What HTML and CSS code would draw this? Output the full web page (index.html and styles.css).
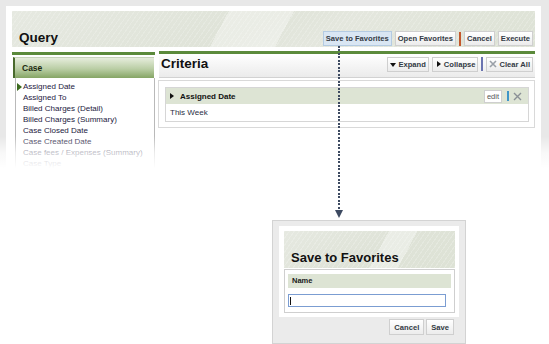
FILE: index.html
```html
<!DOCTYPE html>
<html lang="en">
  <head>
    <meta charset="UTF-8" />
    <meta name="viewport" content="width=device-width, initial-scale=1.0" />
    <title>Query - Save to Favorites</title>
    <link rel="stylesheet" href="styles.css">
  </head>
  <body>
    <div class="app">
      <div class="frame">
        <div class="banner">
          <h1 class="banner-title">Query</h1>
          <div class="actions">
            <button class="btn btn-active">Save to Favorites</button>
            <button class="btn">Open Favorites</button>
            <span class="sep sep-red"></span>
            <button class="btn">Cancel</button>
            <button class="btn">Execute</button>
          </div>
        </div>

        <div class="main">
          <div class="side">
            <div class="side-head">Case</div>
            <ul class="fields">
              <li class="field-current">Assigned Date</li>
              <li>Assigned To</li>
              <li>Billed Charges (Detail)</li>
              <li>Billed Charges (Summary)</li>
              <li>Case Closed Date</li>
              <li>Case Created Date</li>
              <li>Case fees / Expenses (Summary)</li>
              <li>Case Type</li>
            </ul>
          </div>

          <div class="criteria">
            <div class="crit-head">
              <h2 class="crit-title">Criteria</h2>
              <div class="tools">
                <button class="btn"><span class="tri-down"></span>Expand</button>
                <button class="btn"><span class="tri-right"></span>Collapse</button>
                <span class="sep sep-blue"></span>
                <button class="btn btn-clear">
                  <svg width="8" height="8" viewBox="0 0 8 8"><path d="M1 1L7 7M7 1L1 7" stroke="#9aa0a8" stroke-width="1.6"/></svg>
                  Clear All
                </button>
              </div>
            </div>
            <div class="crit-box">
              <div class="crit-item">
                <div class="item-head">
                  <span class="item-name"><span class="tri-black"></span>Assigned Date</span>
                  <span class="item-tools">
                    <span class="edit-btn">edit</span>
                    <span class="bar"></span>
                    <svg width="9" height="9" viewBox="0 0 9 9"><path d="M1 1L8 8M8 1L1 8" stroke="#8a9096" stroke-width="1.4"/></svg>
                  </span>
                </div>
                <div class="item-body">This Week</div>
              </div>
            </div>
          </div>
        </div>
      </div>
      <div class="fade"></div>
    </div>

    <div class="pointer"></div>

    <div class="dialog">
      <div class="dialog-inner">
        <div class="dialog-banner">Save to Favorites</div>
        <div class="dialog-form">
          <div class="form-label">Name</div>
          <div class="form-input"><span class="caret"></span></div>
        </div>
      </div>
      <div class="dialog-buttons">
        <button class="btn">Cancel</button>
        <button class="btn">Save</button>
      </div>
    </div>
  </body>
</html>
```

FILE: styles.css
```css
body {
  margin: 0;
  background: white;
  font-family: "Liberation Sans", Arial, sans-serif;
  color: #1c2238;
  position: relative;
  height: 344px;
  overflow: hidden;
}

.app {
  position: relative;
  height: 172px;
  background: #e8e8e8;
  padding: 6px 8px 0 6px;
  box-sizing: border-box;
  overflow: hidden;
}

.frame {
  background: white;
  height: 100%;
  padding: 5px 6px 0 6px;
}

.fade {
  position: absolute;
  left: 0;
  right: 0;
  bottom: 0;
  height: 36px;
  background: linear-gradient(to bottom, rgba(255, 255, 255, 0), rgba(255, 255, 255, 0.7) 45%, #fff 90%);
}

.banner {
  height: 35px;
  display: flex;
  justify-content: space-between;
  align-items: flex-end;
  padding: 0 2px 1px 7px;
  background:
    linear-gradient(118deg, rgba(255, 255, 255, 0) 40%, rgba(255, 255, 255, 0.35) 40% 52%, rgba(255, 255, 255, 0) 52%),
    repeating-linear-gradient(125deg, rgba(255, 255, 255, 0.18) 0 1px, rgba(255, 255, 255, 0) 1px 4px),
    linear-gradient(150deg, #e6e9e1 0%, #dfe3d8 45%, #e4e7de 60%, #dde2d5 100%);
}

.banner-title {
  margin: 0 0 1px;
  font-size: 13.5px;
  font-weight: bold;
  color: #111;
}

.actions,
.tools {
  display: flex;
  align-items: center;
  gap: 3px;
}

.btn {
  height: 15px;
  padding: 0 2px;
  border: 1px solid #cfcfcf;
  background: linear-gradient(to bottom, #ffffff, #ececec);
  font-family: "Liberation Sans", Arial, sans-serif;
  font-size: 7.6px;
  font-weight: bold;
  color: #333a44;
  display: flex;
  align-items: center;
  gap: 2px;
  cursor: pointer;
}

.btn-active {
  background: #d9e6f3;
  border-color: #b4cbe2;
}

.sep {
  width: 2px;
  height: 14px;
}

.sep-red {
  background: #c4572c;
}

.sep-blue {
  background: #6b74b0;
}

.main {
  display: flex;
  gap: 4px;
  margin-top: 4px;
}

.side {
  width: 143px;
  border-top: 3px solid #5b8a3b;
  margin-top: 1px;
  padding: 2px 0 0 1px;
  box-sizing: border-box;
}

.side-head {
  height: 20px;
  margin-right: 1px;
  border-left: 2px solid #496a2c;
  border-top: 1px solid #c7d3ba;
  padding-left: 7px;
  background: linear-gradient(to bottom, #e6eddc, #b9cda4 55%, #85a564);
  font-size: 8.5px;
  font-weight: bold;
  color: #1d2b12;
  line-height: 20px;
}

.fields {
  list-style: none;
  margin: 0 0 0 2px;
  padding: 3px 0 0 7px;
  border-left: 1px solid #b9b9b9;
  border-right: 1px solid #b9b9b9;
  height: 100px;
}

.fields li {
  position: relative;
  font-size: 8px;
  line-height: 11px;
  color: #1c2040;
  white-space: nowrap;
}

.field-current::before {
  content: "";
  position: absolute;
  left: -6px;
  top: 2px;
  border-left: 5px solid #3c6a1e;
  border-top: 4px solid transparent;
  border-bottom: 4px solid transparent;
}

.criteria {
  flex: 1;
  border-top: 3px solid #5b8a3b;
}

.crit-head {
  height: 23px;
  display: flex;
  justify-content: space-between;
  align-items: center;
  padding: 0 2px 0 2px;
  background: linear-gradient(to bottom, #ffffff, #ebebeb);
  border-bottom: 1px solid #d2d2d2;
}

.crit-title {
  margin: 0 0 4px;
  font-size: 13.5px;
  font-weight: bold;
  color: #111;
}

.tools {
  margin-bottom: 3px;
}

.tri-down {
  border-top: 4px solid #111;
  border-left: 3px solid transparent;
  border-right: 3px solid transparent;
  margin-top: 1px;
}

.tri-right {
  border-left: 4px solid #111;
  border-top: 3px solid transparent;
  border-bottom: 3px solid transparent;
  margin: 0 1px 0 2px;
}

.crit-box {
  margin: 2px 0 0 -1px;
  border: 1px solid #d9d9d9;
  padding: 6px 5px 5px 6px;
}

.crit-item {
  border: 1px solid #d6d6d6;
}

.item-head {
  height: 16px;
  background: #dde4d4;
  display: flex;
  justify-content: space-between;
  align-items: center;
  padding: 0 6px 0 4px;
}

.item-name {
  display: flex;
  align-items: center;
  font-size: 8px;
  font-weight: bold;
  color: #111;
}

.tri-black {
  border-left: 4px solid #111;
  border-top: 3.5px solid transparent;
  border-bottom: 3.5px solid transparent;
  margin-right: 6px;
}

.item-tools {
  display: flex;
  align-items: center;
  gap: 5px;
}

.edit-btn {
  border: 1px solid #cfcfcf;
  background: white;
  font-size: 7.5px;
  color: #555;
  padding: 1px 2px;
  line-height: 9px;
}

.bar {
  width: 2px;
  height: 10px;
  background: #3d95c8;
  margin-right: -1px;
}

.item-body {
  height: 17px;
  line-height: 17px;
  padding-left: 4px;
  font-size: 8px;
  color: #2a2f44;
}

.pointer {
  position: absolute;
  left: 338px;
  top: 46px;
  height: 164px;
  width: 2px;
  background: repeating-linear-gradient(to bottom, #3d4a61 0 2px, transparent 2px 3.5px);
}

.pointer::after {
  content: "";
  position: absolute;
  left: -3px;
  bottom: -8px;
  border-top: 8px solid #3d4a61;
  border-left: 4px solid transparent;
  border-right: 4px solid transparent;
}

.dialog {
  margin: 48px 0 0 272px;
  width: 194px;
  height: 124px;
  box-sizing: border-box;
  background: #ebebeb;
  border: 1px solid #d3d3d3;
  padding: 5px 6px 0 6px;
}

.dialog-inner {
  background: white;
  padding: 5px 4px 4px 5px;
}

.dialog-banner {
  height: 37px;
  box-sizing: border-box;
  padding: 19px 0 0 7px;
  font-size: 13px;
  font-weight: bold;
  color: #111;
  background:
    linear-gradient(118deg, rgba(255, 255, 255, 0) 55%, rgba(255, 255, 255, 0.35) 55% 70%, rgba(255, 255, 255, 0) 70%),
    repeating-linear-gradient(125deg, rgba(255, 255, 255, 0.2) 0 1px, rgba(255, 255, 255, 0) 1px 4px),
    linear-gradient(150deg, #e6e9e1 0%, #dfe3d8 50%, #dde2d5 100%);
}

.dialog-form {
  margin-top: 1px;
  border: 1px solid #cfcfcf;
  padding: 4px 3px 5px 3px;
}

.form-label {
  height: 14px;
  line-height: 14px;
  background: #dde4d4;
  padding-left: 4px;
  font-size: 7.5px;
  font-weight: bold;
  color: #1a1a1a;
}

.form-input {
  margin-top: 6px;
  width: 158px;
  height: 13px;
  box-sizing: border-box;
  border: 1px solid #7b9dd2;
  padding: 2px 0 0 1px;
}

.caret {
  display: block;
  width: 1px;
  height: 8px;
  background: #111;
}

.dialog-buttons {
  display: flex;
  justify-content: flex-end;
  gap: 2px;
  margin-top: 2px;
  padding-right: 5px;
}

.dialog-buttons .btn {
  height: 16px;
  padding: 0 4px;
}
```
